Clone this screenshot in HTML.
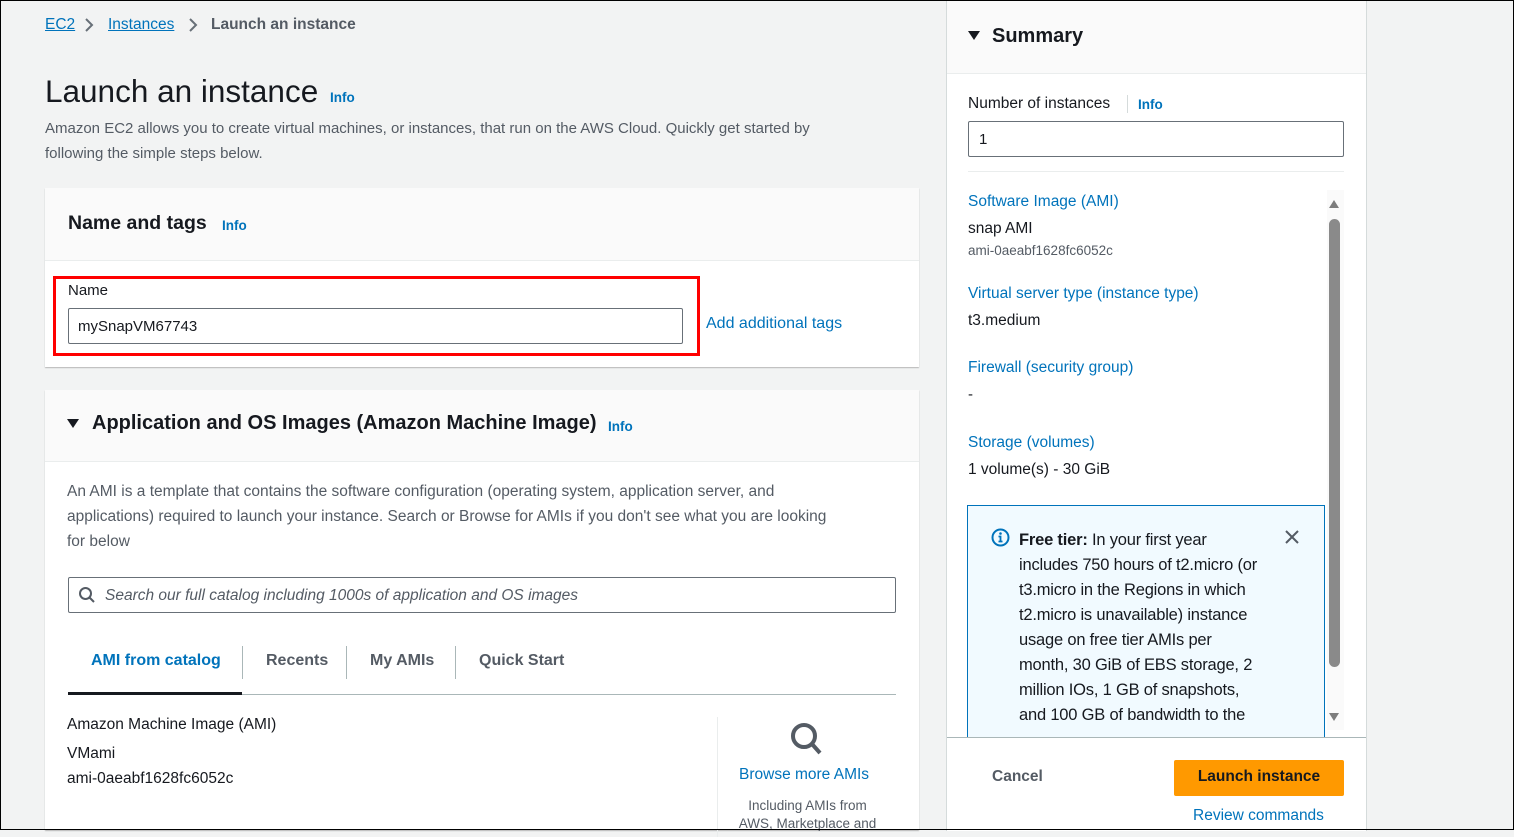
<!DOCTYPE html>
<html><head><meta charset="utf-8"><style>
*{box-sizing:border-box;margin:0;padding:0}
body{width:1514px;height:830px;overflow:hidden;background:#f2f3f3;font-family:"Liberation Sans",sans-serif;color:#16191f;position:relative;font-size:15px}
.a{position:absolute;white-space:nowrap}
.link{color:#0073bb}
.info{color:#0073bb;font-weight:bold;font-size:13.5px}
.frame{position:absolute;left:0;top:0;width:1514px;height:830px;border:1px solid #000;pointer-events:none;z-index:10}
.panel{position:absolute;background:#fff;box-shadow:0 1px 1px rgba(0,0,0,.25)}
.hdr{position:absolute;left:0;right:0;top:0;background:#fafafa;border-bottom:1px solid #eaeded}
.input{position:absolute;border:1px solid #687078;border-radius:2px;background:#fff}
</style></head><body>
<div class="frame"></div>
<!-- breadcrumb -->
<div class="a link" style="left:45px;top:16px;font-size:15.5px;text-decoration:underline">EC2</div>
<svg class="a" style="left:84px;top:17px" width="10" height="16"><path d="M2 2l6 6-6 6" stroke="#687078" stroke-width="2" fill="none"/></svg>
<div class="a link" style="left:108px;top:16px;font-size:15.5px;text-decoration:underline">Instances</div>
<svg class="a" style="left:188px;top:17px" width="10" height="16"><path d="M2 2l6 6-6 6" stroke="#687078" stroke-width="2" fill="none"/></svg>
<div class="a" style="left:211px;top:16px;font-size:15.5px;color:#545b64;font-weight:bold">Launch an instance</div>
<div class="a" style="left:45px;top:73px;font-size:31.5px">Launch an instance</div>
<div class="a info" style="left:330px;top:90px">Info</div>
<div class="a" style="left:45px;top:116px;font-size:15px;color:#545b64;line-height:25px;white-space:normal;width:822px">Amazon EC2 allows you to create virtual machines, or instances, that run on the AWS Cloud. Quickly get started by following the simple steps below.</div>

<!-- name and tags -->
<div class="panel" style="left:45px;top:188px;width:874px;height:179px">
 <div class="hdr" style="height:73px"></div>
 <div class="a" style="left:23px;top:24px;font-size:19.5px;font-weight:bold">Name and tags</div>
 <div class="a info" style="left:177px;top:30px">Info</div>
</div>
<div class="a" style="left:53px;top:276px;width:647px;height:80px;border:3px solid #f00"></div>
<div class="a" style="left:68px;top:282px;font-size:15px">Name</div>
<div class="input" style="left:68px;top:308px;width:615px;height:36px"></div>
<div class="a" style="left:78px;top:318px;font-size:15px">mySnapVM67743</div>
<div class="a link" style="left:706px;top:315px;font-size:16px">Add additional tags</div>

<!-- AMI panel -->
<div class="panel" style="left:45px;top:390px;width:874px;height:440px">
 <div class="hdr" style="height:72px"></div>
 <svg class="a" style="left:22px;top:29px" width="12" height="10"><path d="M0 0h12L6 9z" fill="#16191f"/></svg>
 <div class="a" style="left:47px;top:22px;font-size:20px;font-weight:bold">Application and OS Images (Amazon Machine Image)</div>
 <div class="a info" style="left:563px;top:29px">Info</div>
 <div class="a" style="left:22px;top:89px;width:760px;white-space:normal;line-height:25px;color:#545b64;font-size:15.5px">An AMI is a template that contains the software configuration (operating system, application server, and applications) required to launch your instance. Search or Browse for AMIs if you don't see what you are looking for below</div>
 <div class="input" style="left:23px;top:187px;width:828px;height:36px"></div>
 <svg class="a" style="left:33px;top:196px" width="18" height="18"><circle cx="7.5" cy="7.5" r="5.5" stroke="#545b64" stroke-width="2" fill="none"/><path d="M11.5 11.5l4.5 4.5" stroke="#545b64" stroke-width="2"/></svg>
 <div class="a" style="left:60px;top:197px;font-style:italic;color:#545b64;font-size:15.5px">Search our full catalog including 1000s of application and OS images</div>
 <div class="a" style="left:46px;top:262px;font-weight:bold;color:#0073bb;font-size:16px">AMI from catalog</div>
 <div class="a" style="left:197px;top:256px;width:1px;height:33px;background:#aab7b8"></div>
 <div class="a" style="left:221px;top:262px;font-weight:bold;color:#545b64;font-size:16px">Recents</div>
 <div class="a" style="left:301px;top:256px;width:1px;height:33px;background:#aab7b8"></div>
 <div class="a" style="left:325px;top:262px;font-weight:bold;color:#545b64;font-size:16px">My AMIs</div>
 <div class="a" style="left:410px;top:256px;width:1px;height:33px;background:#aab7b8"></div>
 <div class="a" style="left:434px;top:262px;font-weight:bold;color:#545b64;font-size:16px">Quick Start</div>
 <div class="a" style="left:23px;top:304px;width:828px;height:1px;background:#aab7b8"></div>
 <div class="a" style="left:23px;top:302px;width:174px;height:3px;background:#16191f"></div>
 <div class="a" style="left:22px;top:326px;font-size:15.5px">Amazon Machine Image (AMI)</div>
 <div class="a" style="left:22px;top:355px;font-size:15.5px">VMami</div>
 <div class="a" style="left:22px;top:380px;font-size:15.5px">ami-0aeabf1628fc6052c</div>
 <div class="a" style="left:672px;top:327px;width:1px;height:120px;background:#eaeded"></div>
 <svg class="a" style="left:744px;top:331px" width="36" height="36"><circle cx="15" cy="15" r="11" stroke="#545b64" stroke-width="4" fill="none"/><path d="M23 23l8 9" stroke="#545b64" stroke-width="4"/></svg>
 <div class="a link" style="left:694px;top:376px;font-size:15.5px">Browse more AMIs</div>
 <div class="a" style="left:690px;top:407px;width:145px;text-align:center;white-space:normal;font-size:13.5px;color:#545b64;line-height:18px">Including AMIs from AWS, Marketplace and</div>
</div>

<!-- summary -->
<div class="a" style="left:946px;top:1px;width:421px;height:830px;background:#fff;border-left:1px solid #d5dbdb;border-right:1px solid #d5dbdb"></div>
<div class="a" style="left:947px;top:1px;width:419px;height:73px;background:#fafafa;border-bottom:1px solid #eaeded"></div>
<svg class="a" style="left:968px;top:31px" width="12" height="10"><path d="M0 0h12L6 9z" fill="#16191f"/></svg>
<div class="a" style="left:992px;top:25px;font-size:20px;font-weight:bold">Summary</div>
<div class="a" style="left:968px;top:95px;font-size:15.5px">Number of instances</div>
<div class="a" style="left:1127px;top:95px;width:1px;height:18px;background:#d5dbdb"></div>
<div class="a info" style="left:1138px;top:97px">Info</div>
<div class="input" style="left:968px;top:121px;width:376px;height:36px"></div>
<div class="a" style="left:979px;top:131px">1</div>
<div class="a" style="left:968px;top:171px;width:376px;height:1px;background:#eaeded"></div>
<div class="a" style="left:1327px;top:190px;width:17px;height:540px;background:#fafafa"></div>
<svg class="a" style="left:1328px;top:199px" width="12" height="10"><path d="M6 1l5 8H1z" fill="#7d7d7d"/></svg>
<div class="a" style="left:1329px;top:219px;width:11px;height:448px;background:#8a8a8a;border-radius:6px"></div>
<svg class="a" style="left:1328px;top:712px" width="12" height="10"><path d="M1 1h10L6 9z" fill="#7d7d7d"/></svg>
<div class="a link" style="left:968px;top:193px;font-size:15.5px">Software Image (AMI)</div>
<div class="a" style="left:968px;top:220px;font-size:15.5px">snap AMI</div>
<div class="a" style="left:968px;top:243px;font-size:13.5px;color:#545b64">ami-0aeabf1628fc6052c</div>
<div class="a link" style="left:968px;top:285px;font-size:15.5px">Virtual server type (instance type)</div>
<div class="a" style="left:968px;top:312px;font-size:15.5px">t3.medium</div>
<div class="a link" style="left:968px;top:359px;font-size:15.5px">Firewall (security group)</div>
<div class="a" style="left:968px;top:386px">-</div>
<div class="a link" style="left:968px;top:434px;font-size:15.5px">Storage (volumes)</div>
<div class="a" style="left:968px;top:461px;font-size:15.5px">1 volume(s) - 30 GiB</div>
<div class="a" style="left:967px;top:505px;width:358px;height:232px;background:#f1faff;border:1px solid #0073bb;border-bottom:none;overflow:hidden">
 <div class="a" style="left:51px;top:22px;width:243px;white-space:normal;line-height:25px;color:#16191f;font-size:16.5px;letter-spacing:-0.2px"><b>Free tier:</b> In your first year includes 750 hours of t2.micro (or t3.micro in the Regions in which t2.micro is unavailable) instance usage on free tier AMIs per month, 30 GiB of EBS storage, 2 million IOs, 1 GB of snapshots, and 100 GB of bandwidth to the</div>
</div>
<svg class="a" style="left:991px;top:528px" width="19" height="19"><circle cx="9.5" cy="9.5" r="8" stroke="#0073bb" stroke-width="2" fill="none"/><circle cx="9.5" cy="5.5" r="1.3" fill="#0073bb"/><path d="M7.5 8.5h2v5M7.5 13.5h4" stroke="#0073bb" stroke-width="1.8" fill="none"/></svg>
<svg class="a" style="left:1284px;top:529px" width="16" height="16"><path d="M2 2l12 12M14 2L2 14" stroke="#545b64" stroke-width="2"/></svg>
<div class="a" style="left:947px;top:737px;width:419px;height:93px;background:#fff;border-top:1px solid #aab7b8"></div>
<div class="a" style="left:992px;top:768px;font-weight:bold;color:#545b64;font-size:15.5px">Cancel</div>
<div class="a" style="left:1174px;top:760px;width:170px;height:36px;background:#ff9900;border-radius:2px"></div>
<div class="a" style="left:1174px;top:768px;width:170px;text-align:center;font-weight:bold;font-size:15.5px">Launch instance</div>
<div class="a link" style="left:1193px;top:807px;font-size:15.5px">Review commands</div>
</body></html>
